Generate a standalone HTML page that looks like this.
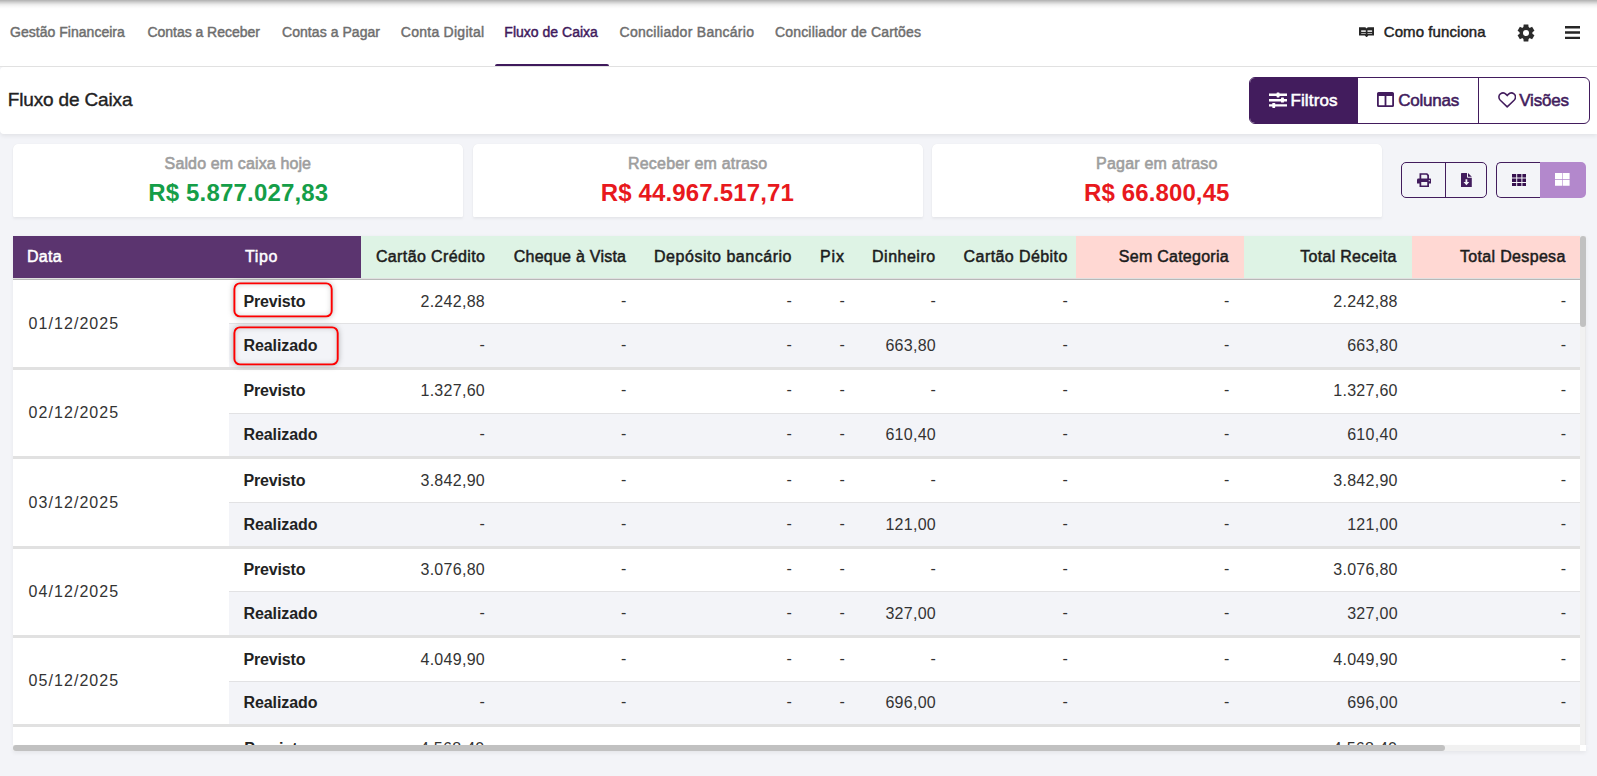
<!DOCTYPE html>
<html lang="pt-BR"><head><meta charset="utf-8"><title>Fluxo de Caixa</title>
<style>
*{box-sizing:border-box;margin:0;padding:0}
html,body{width:1597px;height:776px;overflow:hidden}
body{background:#f3f4f8;font-family:"Liberation Sans",sans-serif;color:#222;position:relative}
div,span,svg{position:absolute}
.t{white-space:nowrap;line-height:1.25}
.nav{left:0;top:0;width:1597px;height:67px;background:#fff;border-bottom:1px solid #e3e3e3}
.topshadow{left:0;top:0;width:1597px;height:9px;background:linear-gradient(to bottom,rgba(0,0,0,.31) 0,rgba(0,0,0,.18) 26%,rgba(0,0,0,.07) 52%,rgba(0,0,0,.02) 78%,rgba(0,0,0,0) 100%)}
.nv{font-size:14px;color:#6e6e6e;-webkit-text-stroke:.45px #6e6e6e}
.nv.act{color:#3f1a5c;-webkit-text-stroke:.45px #3f1a5c}
.ul{left:495px;top:63.5px;width:113.6px;height:2.5px;background:#3f1a5c;border-radius:2px 2px 0 0}
.how{font-size:15px;color:#222;-webkit-text-stroke:.45px #222}
.titlebar{left:0;top:67px;width:1597px;height:67px;background:#fff;border-radius:4px 0 0 4px;box-shadow:0 2px 4px rgba(0,0,20,.07)}
.title{font-size:19px;color:#222;-webkit-text-stroke:.38px #222}
.bgrp{left:1249px;top:77px;width:341px;height:47px;border:1px solid #421c5d;border-radius:6px;overflow:hidden;background:#fff}
.bgrp i{position:absolute;top:0;height:45px}
.bt{font-size:17px;color:#421c5d;-webkit-text-stroke:.55px #421c5d}
.bt.w{color:#fff;-webkit-text-stroke:.55px #fff}
.card{top:144px;width:450.3px;height:73px;background:#fff;border-radius:5px 5px 1px 1px;box-shadow:0 0 1px rgba(0,0,0,.08),0 2px 3px rgba(0,0,0,.05)}
.cl{font-size:16px;color:#9e9e9e;-webkit-text-stroke:.6px #9e9e9e}
.cv{font-size:24px;font-weight:700}
.g{color:#159e48}.rd{color:#e8191d}
.ib{top:162px;height:36px;border:1px solid #421c5d;border-radius:5px;overflow:hidden}
.ib i{position:absolute}
.tblbg{left:13px;top:236px;width:1573px;height:515px;background:#fff;box-shadow:0 1px 4px rgba(0,0,0,.05)}
.hd{top:236px;height:42px}
.thp{background:#5b346f}
.thg{background:#def3e5}
.thr{background:#ffd8d3}
.hb{left:13px;top:278px;width:1567px;height:2px;background:linear-gradient(#e0e0e0 50%,#b8b8b8 50%)}
.th{font-size:16px;color:#1c1c1c;-webkit-text-stroke:.5px #1c1c1c}
.th.w{color:#fff;-webkit-text-stroke:.5px #fff}
.r2bg{left:229px;width:1351px;height:43.7px;background:#f3f4f8;border-top:1px solid #e2e2e4}
.sep{left:13px;width:1567px;height:3px;background:#e1e1e1}
.dt{font-size:16px;color:#333}
.tp{font-size:16px;font-weight:700;color:#222}
.nm{font-size:16px;color:#333}
.box{border-radius:6px;box-shadow:0 0 6px rgba(0,0,0,.34), inset 0 0 6px rgba(0,0,0,.24)}
.cover{left:0;top:745px;width:1597px;height:31px;background:#f3f4f8}
.vs{left:1580px;top:236px;width:6px;height:509px;background:#f1f1f1;box-shadow:inset -1px 0 0 rgba(0,0,30,.03)}
.vs i{position:absolute;left:0;top:0;width:6px;height:91px;background:#c1c1c1;border-radius:3px}
.hs{left:13px;top:745px;width:1573px;height:6px;background:#fff;box-shadow:0 2px 4px rgba(0,0,0,.06)}
.hs b{position:absolute;left:0;top:0;width:1567px;height:6px;background:#f1f1f1}
.hs i{position:absolute;left:0;top:0;width:1432px;height:6px;background:#c1c1c1;border-radius:3px}

</style></head>
<body>
<div class="nav"></div>
<div class="ul"></div>
<div class="topshadow"></div>
<div class="titlebar"></div>
<div class="bgrp"><i style="left:0;width:108px;background:#421c5d"></i><i style="left:228px;width:1px;background:#421c5d"></i></div>
<div class="card" style="left:13px"></div>
<div class="card" style="left:472.8px"></div>
<div class="card" style="left:932.2px"></div>
<div class="ib" style="left:1401px;width:86px"><i style="left:43px;top:0;width:1px;height:36px;background:#421c5d"></i></div>
<div style="left:1496px;top:162px;width:44px;height:36px;border:1px solid #421c5d;border-right:0;border-radius:5px 0 0 5px"></div>
<div style="left:1540px;top:162px;width:46px;height:36px;background:#b388cc;border-radius:0 5px 5px 0"></div>
<div class="tblbg"></div>
<div class="hd thp" style="left:13px;width:348px"></div>
<div class="hd thg" style="left:361px;width:715px"></div>
<div class="hd thr" style="left:1076px;width:168px"></div>
<div class="hd thg" style="left:1244px;width:168px"></div>
<div class="hd thr" style="left:1412px;width:168px"></div>
<div class="hb"></div>
<div class="r2bg" style="top:323px;height:44px"></div><div class="sep" style="top:367px"></div>
<div class="r2bg" style="top:413px;height:43px"></div><div class="sep" style="top:456px"></div>
<div class="r2bg" style="top:502px;height:44px"></div><div class="sep" style="top:546px"></div>
<div class="r2bg" style="top:591px;height:44px"></div><div class="sep" style="top:635px"></div>
<div class="r2bg" style="top:681px;height:43px"></div><div class="sep" style="top:724px"></div>
<div class="r2bg" style="top:770px;height:44px"></div><div class="sep" style="top:814px"></div><span id="n1" class="t nv" style="top:24.00px;left:10.00px;letter-spacing:0.028px;">Gestão Financeira</span>
<span id="n2" class="t nv" style="top:24.00px;left:147.45px;letter-spacing:-0.030px;">Contas a Receber</span>
<span id="n3" class="t nv" style="top:24.00px;left:282.00px;letter-spacing:0.055px;">Contas a Pagar</span>
<span id="n4" class="t nv" style="top:24.00px;left:400.80px;letter-spacing:0.262px;">Conta Digital</span>
<span id="n5" class="t nv act" style="top:24.00px;left:504.35px;letter-spacing:0.014px;">Fluxo de Caixa</span>
<span id="n6" class="t nv" style="top:24.00px;left:619.55px;letter-spacing:0.275px;">Conciliador Bancário</span>
<span id="n7" class="t nv" style="top:24.00px;left:775.00px;letter-spacing:0.171px;">Conciliador de Cartões</span>
<span id="how" class="t how" style="top:23.00px;left:1383.80px;letter-spacing:0.075px;">Como funciona</span>
<span id="title" class="t title" style="top:88.00px;left:7.75px;letter-spacing:-0.156px;">Fluxo de Caixa</span>
<span id="b1" class="t bt w" style="top:90.00px;left:1290.40px;letter-spacing:0.150px;">Filtros</span>
<span id="b2" class="t bt" style="top:90.00px;left:1398.30px;letter-spacing:-0.240px;">Colunas</span>
<span id="b3" class="t bt" style="top:90.00px;left:1519.20px;letter-spacing:-0.180px;">Visões</span>
<span id="c1l" class="t cl" style="top:154.00px;left:164.60px;letter-spacing:0.130px;">Saldo em caixa hoje</span>
<span id="c1v" class="t cv g" style="top:178.00px;left:148.20px;letter-spacing:0.180px;">R$ 5.877.027,83</span>
<span id="c2l" class="t cl" style="top:154.00px;left:628.00px;letter-spacing:0.197px;">Receber em atraso</span>
<span id="c2v" class="t cv rd" style="top:178.00px;left:600.75px;letter-spacing:0.150px;">R$ 44.967.517,71</span>
<span id="c3l" class="t cl" style="top:154.00px;left:1096.00px;letter-spacing:0.225px;">Pagar em atraso</span>
<span id="c3v" class="t cv rd" style="top:178.00px;left:1084.00px;letter-spacing:0.123px;">R$ 66.800,45</span>
<span id="h1" class="t th w" style="top:247.00px;left:27.00px;letter-spacing:0.300px;">Data</span>
<span id="h2" class="t th w" style="top:247.00px;left:245.00px;letter-spacing:0.600px;">Tipo</span>
<span id="h3" class="t th" style="top:247.00px;left:375.88px;letter-spacing:0.381px;">Cartão Crédito</span>
<span id="h4" class="t th" style="top:247.00px;left:513.75px;letter-spacing:0.242px;">Cheque à Vista</span>
<span id="h5" class="t th" style="top:247.00px;left:654.00px;letter-spacing:0.534px;">Depósito bancário</span>
<span id="h6" class="t th" style="top:247.00px;left:820.00px;letter-spacing:0.900px;">Pix</span>
<span id="h7" class="t th" style="top:247.00px;left:872.00px;letter-spacing:0.514px;">Dinheiro</span>
<span id="h8" class="t th" style="top:247.00px;left:963.62px;letter-spacing:0.413px;">Cartão Débito</span>
<span id="h9" class="t th" style="top:247.00px;left:1118.80px;letter-spacing:0.262px;">Sem Categoria</span>
<span id="h10" class="t th" style="top:247.00px;left:1300.20px;letter-spacing:0.300px;">Total Receita</span>
<span id="h11" class="t th" style="top:247.00px;left:1460.00px;letter-spacing:0.330px;">Total Despesa</span>
<span id="d0" class="t dt" style="top:314.00px;left:28.60px;letter-spacing:1.050px;">01/12/2025</span>
<span id="t00" class="t tp" style="top:292.00px;left:243.50px;letter-spacing:-0.161px;">Previsto</span>
<span id="v00cc" class="t nm" style="top:292.00px;right:1112.00px;letter-spacing:0.280px;">2.242,88</span>
<span id="v00cv" class="t nm" style="top:290.50px;right:970.50px;letter-spacing:0.280px;">-</span>
<span id="v00db" class="t nm" style="top:290.50px;right:805.00px;letter-spacing:0.280px;">-</span>
<span id="v00pix" class="t nm" style="top:290.50px;right:752.00px;letter-spacing:0.280px;">-</span>
<span id="v00din" class="t nm" style="top:290.50px;right:661.00px;letter-spacing:0.280px;">-</span>
<span id="v00cd" class="t nm" style="top:290.50px;right:529.00px;letter-spacing:0.280px;">-</span>
<span id="v00sc" class="t nm" style="top:290.50px;right:367.40px;letter-spacing:0.280px;">-</span>
<span id="v00tr" class="t nm" style="top:292.00px;right:199.20px;letter-spacing:0.280px;">2.242,88</span>
<span id="v00td" class="t nm" style="top:290.50px;right:30.60px;letter-spacing:0.280px;">-</span>
<span id="t01" class="t tp" style="top:336.00px;left:243.50px;letter-spacing:-0.084px;">Realizado</span>
<span id="v01cc" class="t nm" style="top:334.50px;right:1112.00px;letter-spacing:0.280px;">-</span>
<span id="v01cv" class="t nm" style="top:334.50px;right:970.50px;letter-spacing:0.280px;">-</span>
<span id="v01db" class="t nm" style="top:334.50px;right:805.00px;letter-spacing:0.280px;">-</span>
<span id="v01pix" class="t nm" style="top:334.50px;right:752.00px;letter-spacing:0.280px;">-</span>
<span id="v01din" class="t nm" style="top:336.00px;right:661.00px;letter-spacing:0.280px;">663,80</span>
<span id="v01cd" class="t nm" style="top:334.50px;right:529.00px;letter-spacing:0.280px;">-</span>
<span id="v01sc" class="t nm" style="top:334.50px;right:367.40px;letter-spacing:0.280px;">-</span>
<span id="v01tr" class="t nm" style="top:336.00px;right:199.20px;letter-spacing:0.280px;">663,80</span>
<span id="v01td" class="t nm" style="top:334.50px;right:30.60px;letter-spacing:0.280px;">-</span>
<span id="d1" class="t dt" style="top:403.00px;left:28.60px;letter-spacing:1.050px;">02/12/2025</span>
<span id="t10" class="t tp" style="top:381.00px;left:243.50px;letter-spacing:-0.161px;">Previsto</span>
<span id="v10cc" class="t nm" style="top:381.00px;right:1112.00px;letter-spacing:0.280px;">1.327,60</span>
<span id="v10cv" class="t nm" style="top:379.50px;right:970.50px;letter-spacing:0.280px;">-</span>
<span id="v10db" class="t nm" style="top:379.50px;right:805.00px;letter-spacing:0.280px;">-</span>
<span id="v10pix" class="t nm" style="top:379.50px;right:752.00px;letter-spacing:0.280px;">-</span>
<span id="v10din" class="t nm" style="top:379.50px;right:661.00px;letter-spacing:0.280px;">-</span>
<span id="v10cd" class="t nm" style="top:379.50px;right:529.00px;letter-spacing:0.280px;">-</span>
<span id="v10sc" class="t nm" style="top:379.50px;right:367.40px;letter-spacing:0.280px;">-</span>
<span id="v10tr" class="t nm" style="top:381.00px;right:199.20px;letter-spacing:0.280px;">1.327,60</span>
<span id="v10td" class="t nm" style="top:379.50px;right:30.60px;letter-spacing:0.280px;">-</span>
<span id="t11" class="t tp" style="top:425.00px;left:243.50px;letter-spacing:-0.084px;">Realizado</span>
<span id="v11cc" class="t nm" style="top:423.50px;right:1112.00px;letter-spacing:0.280px;">-</span>
<span id="v11cv" class="t nm" style="top:423.50px;right:970.50px;letter-spacing:0.280px;">-</span>
<span id="v11db" class="t nm" style="top:423.50px;right:805.00px;letter-spacing:0.280px;">-</span>
<span id="v11pix" class="t nm" style="top:423.50px;right:752.00px;letter-spacing:0.280px;">-</span>
<span id="v11din" class="t nm" style="top:425.00px;right:661.00px;letter-spacing:0.280px;">610,40</span>
<span id="v11cd" class="t nm" style="top:423.50px;right:529.00px;letter-spacing:0.280px;">-</span>
<span id="v11sc" class="t nm" style="top:423.50px;right:367.40px;letter-spacing:0.280px;">-</span>
<span id="v11tr" class="t nm" style="top:425.00px;right:199.20px;letter-spacing:0.280px;">610,40</span>
<span id="v11td" class="t nm" style="top:423.50px;right:30.60px;letter-spacing:0.280px;">-</span>
<span id="d2" class="t dt" style="top:493.00px;left:28.60px;letter-spacing:1.050px;">03/12/2025</span>
<span id="t20" class="t tp" style="top:471.00px;left:243.50px;letter-spacing:-0.161px;">Previsto</span>
<span id="v20cc" class="t nm" style="top:471.00px;right:1112.00px;letter-spacing:0.280px;">3.842,90</span>
<span id="v20cv" class="t nm" style="top:469.50px;right:970.50px;letter-spacing:0.280px;">-</span>
<span id="v20db" class="t nm" style="top:469.50px;right:805.00px;letter-spacing:0.280px;">-</span>
<span id="v20pix" class="t nm" style="top:469.50px;right:752.00px;letter-spacing:0.280px;">-</span>
<span id="v20din" class="t nm" style="top:469.50px;right:661.00px;letter-spacing:0.280px;">-</span>
<span id="v20cd" class="t nm" style="top:469.50px;right:529.00px;letter-spacing:0.280px;">-</span>
<span id="v20sc" class="t nm" style="top:469.50px;right:367.40px;letter-spacing:0.280px;">-</span>
<span id="v20tr" class="t nm" style="top:471.00px;right:199.20px;letter-spacing:0.280px;">3.842,90</span>
<span id="v20td" class="t nm" style="top:469.50px;right:30.60px;letter-spacing:0.280px;">-</span>
<span id="t21" class="t tp" style="top:515.00px;left:243.50px;letter-spacing:-0.084px;">Realizado</span>
<span id="v21cc" class="t nm" style="top:513.50px;right:1112.00px;letter-spacing:0.280px;">-</span>
<span id="v21cv" class="t nm" style="top:513.50px;right:970.50px;letter-spacing:0.280px;">-</span>
<span id="v21db" class="t nm" style="top:513.50px;right:805.00px;letter-spacing:0.280px;">-</span>
<span id="v21pix" class="t nm" style="top:513.50px;right:752.00px;letter-spacing:0.280px;">-</span>
<span id="v21din" class="t nm" style="top:515.00px;right:661.00px;letter-spacing:0.280px;">121,00</span>
<span id="v21cd" class="t nm" style="top:513.50px;right:529.00px;letter-spacing:0.280px;">-</span>
<span id="v21sc" class="t nm" style="top:513.50px;right:367.40px;letter-spacing:0.280px;">-</span>
<span id="v21tr" class="t nm" style="top:515.00px;right:199.20px;letter-spacing:0.280px;">121,00</span>
<span id="v21td" class="t nm" style="top:513.50px;right:30.60px;letter-spacing:0.280px;">-</span>
<span id="d3" class="t dt" style="top:582.00px;left:28.60px;letter-spacing:1.050px;">04/12/2025</span>
<span id="t30" class="t tp" style="top:560.00px;left:243.50px;letter-spacing:-0.161px;">Previsto</span>
<span id="v30cc" class="t nm" style="top:560.00px;right:1112.00px;letter-spacing:0.280px;">3.076,80</span>
<span id="v30cv" class="t nm" style="top:558.50px;right:970.50px;letter-spacing:0.280px;">-</span>
<span id="v30db" class="t nm" style="top:558.50px;right:805.00px;letter-spacing:0.280px;">-</span>
<span id="v30pix" class="t nm" style="top:558.50px;right:752.00px;letter-spacing:0.280px;">-</span>
<span id="v30din" class="t nm" style="top:558.50px;right:661.00px;letter-spacing:0.280px;">-</span>
<span id="v30cd" class="t nm" style="top:558.50px;right:529.00px;letter-spacing:0.280px;">-</span>
<span id="v30sc" class="t nm" style="top:558.50px;right:367.40px;letter-spacing:0.280px;">-</span>
<span id="v30tr" class="t nm" style="top:560.00px;right:199.20px;letter-spacing:0.280px;">3.076,80</span>
<span id="v30td" class="t nm" style="top:558.50px;right:30.60px;letter-spacing:0.280px;">-</span>
<span id="t31" class="t tp" style="top:604.00px;left:243.50px;letter-spacing:-0.084px;">Realizado</span>
<span id="v31cc" class="t nm" style="top:602.50px;right:1112.00px;letter-spacing:0.280px;">-</span>
<span id="v31cv" class="t nm" style="top:602.50px;right:970.50px;letter-spacing:0.280px;">-</span>
<span id="v31db" class="t nm" style="top:602.50px;right:805.00px;letter-spacing:0.280px;">-</span>
<span id="v31pix" class="t nm" style="top:602.50px;right:752.00px;letter-spacing:0.280px;">-</span>
<span id="v31din" class="t nm" style="top:604.00px;right:661.00px;letter-spacing:0.280px;">327,00</span>
<span id="v31cd" class="t nm" style="top:602.50px;right:529.00px;letter-spacing:0.280px;">-</span>
<span id="v31sc" class="t nm" style="top:602.50px;right:367.40px;letter-spacing:0.280px;">-</span>
<span id="v31tr" class="t nm" style="top:604.00px;right:199.20px;letter-spacing:0.280px;">327,00</span>
<span id="v31td" class="t nm" style="top:602.50px;right:30.60px;letter-spacing:0.280px;">-</span>
<span id="d4" class="t dt" style="top:671.00px;left:28.60px;letter-spacing:1.050px;">05/12/2025</span>
<span id="t40" class="t tp" style="top:650.00px;left:243.50px;letter-spacing:-0.161px;">Previsto</span>
<span id="v40cc" class="t nm" style="top:650.00px;right:1112.00px;letter-spacing:0.280px;">4.049,90</span>
<span id="v40cv" class="t nm" style="top:648.50px;right:970.50px;letter-spacing:0.280px;">-</span>
<span id="v40db" class="t nm" style="top:648.50px;right:805.00px;letter-spacing:0.280px;">-</span>
<span id="v40pix" class="t nm" style="top:648.50px;right:752.00px;letter-spacing:0.280px;">-</span>
<span id="v40din" class="t nm" style="top:648.50px;right:661.00px;letter-spacing:0.280px;">-</span>
<span id="v40cd" class="t nm" style="top:648.50px;right:529.00px;letter-spacing:0.280px;">-</span>
<span id="v40sc" class="t nm" style="top:648.50px;right:367.40px;letter-spacing:0.280px;">-</span>
<span id="v40tr" class="t nm" style="top:650.00px;right:199.20px;letter-spacing:0.280px;">4.049,90</span>
<span id="v40td" class="t nm" style="top:648.50px;right:30.60px;letter-spacing:0.280px;">-</span>
<span id="t41" class="t tp" style="top:693.00px;left:243.50px;letter-spacing:-0.084px;">Realizado</span>
<span id="v41cc" class="t nm" style="top:691.50px;right:1112.00px;letter-spacing:0.280px;">-</span>
<span id="v41cv" class="t nm" style="top:691.50px;right:970.50px;letter-spacing:0.280px;">-</span>
<span id="v41db" class="t nm" style="top:691.50px;right:805.00px;letter-spacing:0.280px;">-</span>
<span id="v41pix" class="t nm" style="top:691.50px;right:752.00px;letter-spacing:0.280px;">-</span>
<span id="v41din" class="t nm" style="top:693.00px;right:661.00px;letter-spacing:0.280px;">696,00</span>
<span id="v41cd" class="t nm" style="top:691.50px;right:529.00px;letter-spacing:0.280px;">-</span>
<span id="v41sc" class="t nm" style="top:691.50px;right:367.40px;letter-spacing:0.280px;">-</span>
<span id="v41tr" class="t nm" style="top:693.00px;right:199.20px;letter-spacing:0.280px;">696,00</span>
<span id="v41td" class="t nm" style="top:691.50px;right:30.60px;letter-spacing:0.280px;">-</span>
<span id="d5" class="t dt" style="top:761.00px;left:28.60px;">06/12/2025</span>
<span id="t50" class="t tp" style="top:739.00px;left:244.25px;">Previsto</span>
<span id="v50cc" class="t nm" style="top:739.00px;right:1112.50px;letter-spacing:0.280px;">4.568,40</span>
<span id="v50cv" class="t nm" style="top:737.50px;right:970.75px;letter-spacing:0.280px;">-</span>
<span id="v50db" class="t nm" style="top:737.50px;right:805.50px;letter-spacing:0.280px;">-</span>
<span id="v50pix" class="t nm" style="top:737.50px;right:753.00px;letter-spacing:0.280px;">-</span>
<span id="v50din" class="t nm" style="top:737.50px;right:662.00px;letter-spacing:0.280px;">-</span>
<span id="v50cd" class="t nm" style="top:737.50px;right:530.00px;letter-spacing:0.280px;">-</span>
<span id="v50sc" class="t nm" style="top:737.50px;right:367.90px;letter-spacing:0.280px;">-</span>
<span id="v50tr" class="t nm" style="top:739.00px;right:199.70px;letter-spacing:0.280px;">4.568,40</span>
<span id="v50td" class="t nm" style="top:737.50px;right:31.60px;letter-spacing:0.280px;">-</span>
<span id="t51" class="t tp" style="top:783.00px;left:244.25px;">Realizado</span>
<span id="v51cc" class="t nm" style="top:781.50px;right:1112.50px;letter-spacing:0.280px;">-</span>
<span id="v51cv" class="t nm" style="top:781.50px;right:970.75px;letter-spacing:0.280px;">-</span>
<span id="v51db" class="t nm" style="top:781.50px;right:805.50px;letter-spacing:0.280px;">-</span>
<span id="v51pix" class="t nm" style="top:781.50px;right:753.00px;letter-spacing:0.280px;">-</span>
<span id="v51din" class="t nm" style="top:783.00px;right:662.00px;letter-spacing:0.280px;">512,00</span>
<span id="v51cd" class="t nm" style="top:781.50px;right:530.00px;letter-spacing:0.280px;">-</span>
<span id="v51sc" class="t nm" style="top:781.50px;right:367.90px;letter-spacing:0.280px;">-</span>
<span id="v51tr" class="t nm" style="top:783.00px;right:199.70px;letter-spacing:0.280px;">512,00</span>
<span id="v51td" class="t nm" style="top:781.50px;right:31.60px;letter-spacing:0.280px;">-</span><div class="cover"></div>
<div class="vs"><i></i></div>
<div class="hs"><b></b><i></i></div>
<div class="box" style="left:234px;top:283px;width:98px;height:34px"></div>
<div class="box" style="left:234px;top:327px;width:104px;height:38px"></div>
<svg style="left:230px;top:280px" width="115" height="90" viewBox="230 280 115 90"><rect x="234.4" y="283.4" width="97.300" height="33" rx="5.500" fill="none" stroke="#ff0000" stroke-width="1.900"/><rect x="234.4" y="327.4" width="103.300" height="37" rx="5.500" fill="none" stroke="#ff0000" stroke-width="1.900"/></svg>
<!-- book icon -->
<svg style="left:1359px;top:26.6px" width="15.2" height="10.4" viewBox="0 0 15.2 10.4"><path d="M0 .3H5.6Q7 .3 7.6 1.4Q8.2.3 9.6.3H15.2V8.4H9.4L7.6 10.4L5.8 8.4H0Z" fill="#262626"/><path d="M2.2 3.3H6.8V5H2.2ZM8.5 3.3H13.1V5H8.5Z" fill="#d9d9d9"/><path d="M2.2 6.3H6.8V7.1H2.2ZM8.5 6.3H13.1V7.1H8.5Z" fill="#d0d0d0"/></svg>
<!-- gear -->
<svg style="left:1517px;top:23.5px" width="18" height="18" viewBox="-9 -9 18 18"><g fill="#2b2b2b"><circle r="6.4"/><path id="tooth" d="M-2.300 -8.400H2.300L2.700 -5H-2.700Z"/><path d="M-2.300 -8.400H2.300L2.700 -5H-2.700Z" transform="rotate(60)"/><path d="M-2.300 -8.400H2.300L2.700 -5H-2.700Z" transform="rotate(120)"/><path d="M-2.300 -8.400H2.300L2.700 -5H-2.700Z" transform="rotate(180)"/><path d="M-2.300 -8.400H2.300L2.700 -5H-2.700Z" transform="rotate(240)"/><path d="M-2.300 -8.400H2.300L2.700 -5H-2.700Z" transform="rotate(300)"/></g><circle r="3" fill="#fff"/></svg>
<!-- hamburger -->
<svg style="left:1565px;top:25px" width="15" height="15" viewBox="0 0 15 15"><path d="M0 1H15V3.5H0ZM0 6.3H15V8.7H0ZM0 11.7H15V14.1H0Z" fill="#262626"/></svg>
<!-- sliders -->
<svg style="left:1269px;top:91.5px" width="18" height="16" viewBox="0 0 18 16"><path d="M0 1.6H18V4.1H0ZM0 6.9H18V9.4H0ZM0 12.2H18V14.6H0Z" fill="#fff"/><rect x="7.6" y=".4" width="2.9" height="5" rx=".6" fill="#fff"/><rect x="12" y="5.6" width="2.9" height="5" rx=".6" fill="#fff"/><rect x="3.3" y="10.9" width="2.9" height="5" rx=".6" fill="#fff"/></svg>
<!-- columns -->
<svg style="left:1377px;top:92px" width="17" height="15" viewBox="0 0 17 15"><path fill-rule="evenodd" d="M1.6 0H15.4Q17 0 17 1.6V13.4Q17 15 15.4 15H1.6Q0 15 0 13.4V1.6Q0 0 1.6 0ZM1.8 4V13.2H7.6V4ZM9.4 4V13.2H15.2V4Z" fill="#421c5d"/></svg>
<!-- heart -->
<svg style="left:1497.5px;top:91.5px" width="18.4" height="16.2" viewBox="0 0 18.4 16.2"><path d="M9.2 14.9L2.3 8.3C.3 6.3.5 3.3 2.4 1.9C4.300.5 6.700.9 8.100 2.400L9.200 3.600L10.300 2.400C11.700.9 14.100.5 16 1.900C17.900 3.300 18.100 6.300 16.100 8.300Z" fill="none" stroke="#421c5d" stroke-width="1.55" stroke-linejoin="round"/></svg>
<!-- print -->
<svg style="left:1416.5px;top:172.6px" width="14.5" height="14.4" viewBox="0 0 15 14.6"><path fill-rule="evenodd" d="M2.600 0H10.600L12.400 1.800V5.600H13.600Q15 5.600 15 7V10.600H12.400V14.600H2.600V10.600H0V7Q0 5.600 1.400 5.600H2.600ZM4.400 1.700V5.600H10.600V2.600L9.700 1.700ZM4.400 9.200V12.900H10.600V9.200ZM12.700 7.100A.7.700 0 1 0 12.700 8.500A.7.700 0 1 0 12.700 7.100Z" fill="#421c5d"/></svg>
<!-- file download -->
<svg style="left:1461px;top:172.6px" width="10.8" height="14.4" viewBox="0 0 10.800 14.400"><path d="M.7 0H6V4.100Q6 4.800 6.700 4.800H10.800V13.700Q10.800 14.400 10.100 14.400H.7Q0 14.400 0 13.700V.7Q0 0 .7 0Z" fill="#421c5d"/><path d="M7 0L10.800 3.800H7Z" fill="#421c5d"/><path d="M4.500 6.200H6.300V9.100H8.300L5.400 12.200L2.500 9.100H4.500Z" fill="#f3f4f8"/></svg>
<!-- grid 3x3 -->
<svg style="left:1511.6px;top:173.7px" width="14.6" height="12.4" viewBox="0 0 14.6 12.4"><path d="M0 0H4.200V3.400H0ZM5.200 0H9.400V3.400H5.200ZM10.400 0H14.600V3.400H10.400ZM0 4.500H4.200V7.900H0ZM5.200 4.500H9.400V7.900H5.200ZM10.400 4.500H14.600V7.900H10.400ZM0 9H4.200V12.400H0ZM5.200 9H9.400V12.400H5.200ZM10.400 9H14.600V12.400H10.400Z" fill="#36104f"/></svg>
<!-- grid 2x2 -->
<svg style="left:1555.4px;top:173.2px" width="14.6" height="12.8" viewBox="0 0 14.6 12.8"><path d="M0 0H7V6.100H0ZM7.600 0H14.600V6.100H7.600ZM0 6.700H7V12.800H0ZM7.600 6.700H14.600V12.800H7.600Z" fill="#fff"/></svg>

</body></html>
